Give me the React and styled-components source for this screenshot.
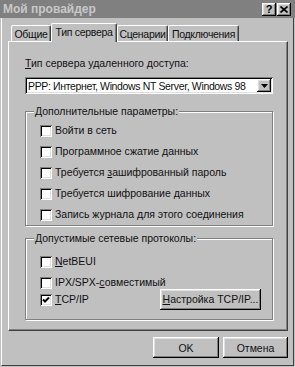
import React from "react";
import styled, { createGlobalStyle } from "styled-components";

const GlobalStyle = createGlobalStyle`
    body {
        margin : 0;
        background : #c0c0c0;
        font-family : "Liberation Sans", Arial, sans-serif;
        font-size : 10.5px;
        color : #111;
    }
`;

const raised = `
    box-shadow : inset -1px -1px #000, inset 1px 1px #fff, inset -2px -2px #808080, inset 2px 2px #dfdfdf;
`;

const sunken = `
    box-shadow : inset 1px 1px #808080, inset -1px -1px #fff, inset 2px 2px #000, inset -2px -2px #dfdfdf;
`;

const Window = styled.div`
    width : 295px;
    height : 367px;
    display : flex;
    flex-direction : column;
    background : #c0c0c0;
    overflow : hidden;
`;

const TitleBar = styled.div`
    height : 18px;
    flex : none;
    background : #808080;
    display : flex;
    align-items : center;
    padding : 0 4px 0 3px;
`;

const Title = styled.span`
    flex : 1;
    font-weight : bold;
    font-size : 12px;
    color : #c8c8c8;
`;

const TitleButton = styled.div`
    width : 14px;
    height : 13px;
    background : #c0c0c0;
    ${raised}
    display : flex;
    align-items : center;
    justify-content : center;
    font-weight : bold;
    font-size : 11px;
    color : #000;
    margin-left : ${props => props.$gap || 0}px;
`;

const Frame = styled.div`
    flex : 1;
    margin : 0 1px 1px 1px;
    border-left : 1px solid #fff;
    border-right : 1px solid #404040;
    border-bottom : 1px solid #404040;
    padding : 5px 5px 0 6px;
    display : flex;
    flex-direction : column;
`;

const Tabs = styled.div`
    display : flex;
    align-items : flex-end;
    height : 18px;
    padding-left : 3px;
    position : relative;
    z-index : 1;
`;

const Tab = styled.div`
    width : ${props => props.$w}px;
    height : ${props => (props.$active ? 19 : 16)}px;
    margin-bottom : ${props => (props.$active ? -1 : 0)}px;
    box-sizing : border-box;
    background : #c0c0c0;
    border-top : 1px solid #fff;
    border-left : 1px solid #fff;
    border-right : 1px solid #404040;
    border-radius : 2px 2px 0 0;
    box-shadow : inset -1px 0 #808080;
    display : flex;
    align-items : center;
    justify-content : center;
    padding-bottom : ${props => (props.$active ? 2 : 0)}px;
    white-space : nowrap;
    letter-spacing : -0.3px;
    overflow : hidden;
`;

const Panel = styled.div`
    height : 290px;
    box-sizing : border-box;
    border-top : 1px solid #fff;
    border-left : 1px solid #fff;
    border-right : 1px solid #404040;
    border-bottom : 1px solid #404040;
    box-shadow : inset -1px -1px #808080;
    padding : 15px 14px 0 16px;
    display : flex;
    flex-direction : column;
`;

const Label = styled.div`
    line-height : 13px;
`;

const Combo = styled.div`
    height : 17px;
    margin-top : 7px;
    box-sizing : border-box;
    background : #fff;
    ${sunken}
    padding : 2px;
    display : flex;
    align-items : center;
`;

const ComboText = styled.span`
    flex : 1;
    padding-left : 1px;
    white-space : nowrap;
    overflow : hidden;
    letter-spacing : -0.35px;
`;

const DropButton = styled.div`
    width : 14px;
    height : 13px;
    flex : none;
    background : #c0c0c0;
    ${raised}
    display : flex;
    align-items : center;
    justify-content : center;
`;

const Group = styled.fieldset`
    margin : ${props => props.$mt}px 0 0 0;
    padding : 0 11px ${props => props.$pb}px 14px;
    border : 1px solid #808080;
    box-shadow : inset 1px 1px #fff, 1px 1px #fff;
    min-width : 0;
    display : flex;
    flex-direction : column;
`;

const Legend = styled.legend`
    padding : 0 1px;
    margin-left : -6px;
    line-height : 13px;
    background : #c0c0c0;
`;

const Row = styled.div`
    display : flex;
    align-items : center;
    gap : 3px;
    height : ${props => props.$h || 13}px;
    margin-top : ${props => props.$mt}px;
    line-height : 13px;
    white-space : nowrap;
`;

const Box = styled.span`
    width : 12px;
    height : 12px;
    flex : none;
    box-sizing : border-box;
    background : #fff;
    ${sunken}
    display : flex;
    align-items : center;
    justify-content : center;
`;

const Button = styled.div`
    width : ${props => props.$w}px;
    height : 21px;
    flex : none;
    background : #c0c0c0;
    ${raised}
    display : flex;
    align-items : center;
    justify-content : center;
    margin-left : ${props => (props.$push ? "auto" : "0")};
`;

const Footer = styled.div`
    display : flex;
    justify-content : flex-end;
    gap : 4px;
    margin-top : 6px;
`;

const Check = ({ checked, children, mt, h, extra }) => (
    <Row $mt={mt} $h={h}>
        <Box>
            {checked && (
                <svg width="8" height="8" viewBox="0 0 8 8">
                    <polyline points="1,3.5 3,5.5 7,1.5" fill="none" stroke="#000" strokeWidth="2" />
                </svg>
            )}
        </Box>
        <span>{children}</span>
        {extra}
    </Row>
);

const App = () => (
    <Window>
        <GlobalStyle />
        <TitleBar>
            <Title>Мой провайдер</Title>
            <TitleButton>?</TitleButton>
            <TitleButton $gap={1}>
                <svg width="8" height="7" viewBox="0 0 8 7">
                    <path d="M0.5 0.5 L7.5 6.5 M7.5 0.5 L0.5 6.5" stroke="#000" strokeWidth="1.6" />
                </svg>
            </TitleButton>
        </TitleBar>
        <Frame>
            <Tabs>
                <Tab $w={40}>Общие</Tab>
                <Tab $w={66} $active>Тип сервера</Tab>
                <Tab $w={51}>Сценарии</Tab>
                <Tab $w={71}>Подключения</Tab>
            </Tabs>
            <Panel>
                <Label><u>Т</u>ип сервера удаленного доступа:</Label>
                <Combo>
                    <ComboText>PPP: Интернет, Windows NT Server, Windows 98</ComboText>
                    <DropButton>
                        <svg width="7" height="4" viewBox="0 0 7 4">
                            <path d="M0 0 H7 L3.5 4 Z" fill="#000" />
                        </svg>
                    </DropButton>
                </Combo>
                <Group $mt={11} $pb={4}>
                    <Legend>Дополнительные параметры:</Legend>
                    <Check mt={6}>Войти в сеть</Check>
                    <Check mt={8}>Программное сжатие данных</Check>
                    <Check mt={8}>Требуется <u>з</u>ашифрованный пароль</Check>
                    <Check mt={8}>Требуется шифрование данных</Check>
                    <Check mt={8}>Запись журнала для этого соединения</Check>
                </Group>
                <Group $mt={6} $pb={9}>
                    <Legend>Допустимые сетевые протоколы:</Legend>
                    <Check mt={10}><u>N</u>etBEUI</Check>
                    <Check mt={8}>IPX/SPX-<u>с</u>овместимый</Check>
                    <Check mt={0} h={21} checked extra={<Button $w={101} $push><u>Н</u>астройка TCP/IP...</Button>}>
                        <u>T</u>CP/IP
                    </Check>
                </Group>
            </Panel>
            <Footer>
                <Button $w={66}>OK</Button>
                <Button $w={65}>Отмена</Button>
            </Footer>
        </Frame>
    </Window>
);

export default App;
